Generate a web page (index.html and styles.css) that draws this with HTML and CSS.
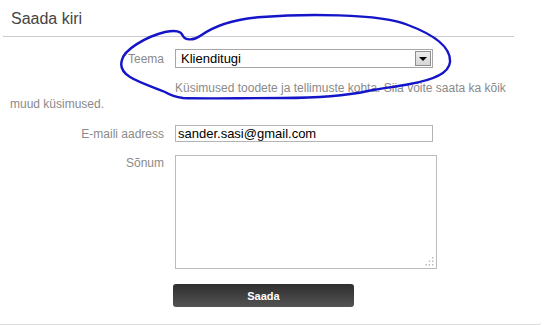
FILE: index.html
```html
<!DOCTYPE html>
<html lang="et">
<head>
  <meta charset="UTF-8">
  <meta name="viewport" content="width=device-width, initial-scale=1.0">
  <title>Saada kiri</title>
  <link rel="stylesheet" href="styles.css">
</head>
<body>

  <div class="panel">
    <h2 class="panel-title">Saada kiri</h2>

    <form class="contact-form">
      <div class="form-row">
        <label class="form-label" for="topic">Teema</label>
        <div class="select-wrap">
          <select id="topic" class="form-select">
            <option>Klienditugi</option>
          </select>
          <span class="select-arrow"></span>
        </div>
      </div>

      <p class="form-hint">Küsimused toodete ja tellimuste kohta. Siia võite saata ka kõik muud küsimused.</p>

      <div class="form-row">
        <label class="form-label" for="email">E-maili aadress</label>
        <input id="email" class="form-input" type="text" value="sander.sasi@gmail.com">
      </div>

      <div class="form-row">
        <label class="form-label form-label-top" for="message">Sõnum</label>
        <div class="textarea-wrap">
          <textarea id="message" class="form-textarea"></textarea>
          <!-- resize grip -->
          <svg class="grip" viewBox="0 0 10 10" width="10" height="10">
            <rect x="8" y="1" width="1.4" height="1.4" />
            <rect x="4.7" y="4.5" width="1.4" height="1.4" />
            <rect x="8" y="4.5" width="1.4" height="1.4" />
            <rect x="1.4" y="8" width="1.4" height="1.4" />
            <rect x="4.7" y="8" width="1.4" height="1.4" />
            <rect x="8" y="8" width="1.4" height="1.4" />
          </svg>
        </div>
      </div>

      <div class="form-row form-actions">
        <span class="form-label"></span>
        <button type="button" class="btn-send">Saada</button>
      </div>
    </form>
  </div>

  <!-- hand drawn marker circle round the topic field -->
  <svg class="scribble" viewBox="0 0 546 325" width="546" height="325">
    <path d="M 122 60
             C 124 50, 145 37, 165 32
             C 176 30, 181 31, 183 36
             C 185 40, 193 41, 200 36
             C 214 26, 232 19, 262 17
             C 300 14, 380 13, 408 25
             C 432 34, 451 46, 450 62
             C 449 74, 432 80, 410 84
             C 395 87, 382 88, 368 91
             C 340 97, 310 98, 283 98
             C 240 98, 200 99, 183 98
             C 175 97, 170 95, 165 92
             C 150 86, 138 82, 130 77
             C 122 72, 120 66, 122 60 Z" />
  </svg>

</body>
</html>
```

FILE: styles.css
```css
body {
  margin: 0;
  padding: 0;
  background-color: #ffffff;
  font-family: "Liberation Sans", Arial, sans-serif;
  color: #444444;
  position: relative;
}

/* Panel header */
.panel-title {
  margin: 0 32px 0 3px;
  padding: 9px 8px 7px;
  font-size: 16px;
  font-weight: normal;
  line-height: 20px;
  color: #454545;
  border-bottom: 1px solid #c9cbd0;
}

/* Form */
.contact-form {
  width: 541px;
  padding: 12px 0 17px;
  border-bottom: 2px solid #dedede;
  border-bottom-right-radius: 4px;
}

.form-row {
  display: flex;
  align-items: center;
  gap: 11px;
  margin-top: 13px;
}

.form-row:first-child {
  margin-top: 0;
}

.form-label {
  width: 164px;
  flex-shrink: 0;
  text-align: right;
  font-size: 12px;
  color: #8a8a8a;
}

.form-label-top {
  align-self: flex-start;
  padding-top: 1px;
}

/* Select */
.select-wrap {
  position: relative;
  width: 258px;
  height: 19px;
}

.form-select {
  appearance: none;
  -webkit-appearance: none;
  width: 100%;
  height: 19px;
  margin: 0;
  padding: 0 20px 0 5px;
  border: 1px solid #a6a6a6;
  border-radius: 0;
  background: #ffffff;
  font-family: inherit;
  font-size: 13px;
  color: #000000;
  outline: none;
}

.select-arrow {
  position: absolute;
  top: 2px;
  right: 2px;
  width: 14px;
  height: 13px;
  border: 1px solid #8e8e8e;
  background: linear-gradient(#ececec, #d6d6d6);
  pointer-events: none;
}

.select-arrow::after {
  content: '';
  position: absolute;
  top: 5px;
  left: 3px;
  border-left: 4px solid transparent;
  border-right: 4px solid transparent;
  border-top: 4px solid #000000;
}

/* Help text under the select */
.form-hint {
  margin: 12px 0 0;
  padding-left: 10px;
  width: 500px;
  text-indent: 165px;
  font-size: 12px;
  line-height: 16px;
  color: #8a8a8a;
}

/* Inputs */
.form-input {
  width: 258px;
  height: 17px;
  box-sizing: border-box;
  margin: 0;
  padding: 0 2px;
  border: 1px solid #b4b4b4;
  font-family: inherit;
  font-size: 13px;
  color: #000000;
  outline: none;
}

.textarea-wrap {
  position: relative;
  width: 262px;
  height: 114px;
}

.form-textarea {
  display: block;
  width: 100%;
  height: 100%;
  box-sizing: border-box;
  margin: 0;
  border: 1px solid #bcbcbc;
  resize: none;
  outline: none;
}

.grip {
  position: absolute;
  right: 3px;
  bottom: 3px;
  fill: #b5b5b5;
}

/* Send button */
.form-actions {
  margin-top: 15px;
}

.form-actions .form-label {
  width: 162px;
}

.btn-send {
  width: 181px;
  height: 23px;
  margin: 0;
  padding: 0;
  border: none;
  border-radius: 3px;
  background: linear-gradient(#2e2e2e, #535353);
  font-family: "Liberation Sans", Arial, sans-serif;
  font-size: 11px;
  font-weight: bold;
  color: #ffffff;
  cursor: pointer;
}

/* Blue marker scribble */
.scribble {
  position: absolute;
  top: 0;
  left: 0;
  pointer-events: none;
}

.scribble path {
  fill: none;
  stroke: #1414c8;
  stroke-width: 2.4;
  stroke-linecap: round;
  stroke-linejoin: round;
}
```
